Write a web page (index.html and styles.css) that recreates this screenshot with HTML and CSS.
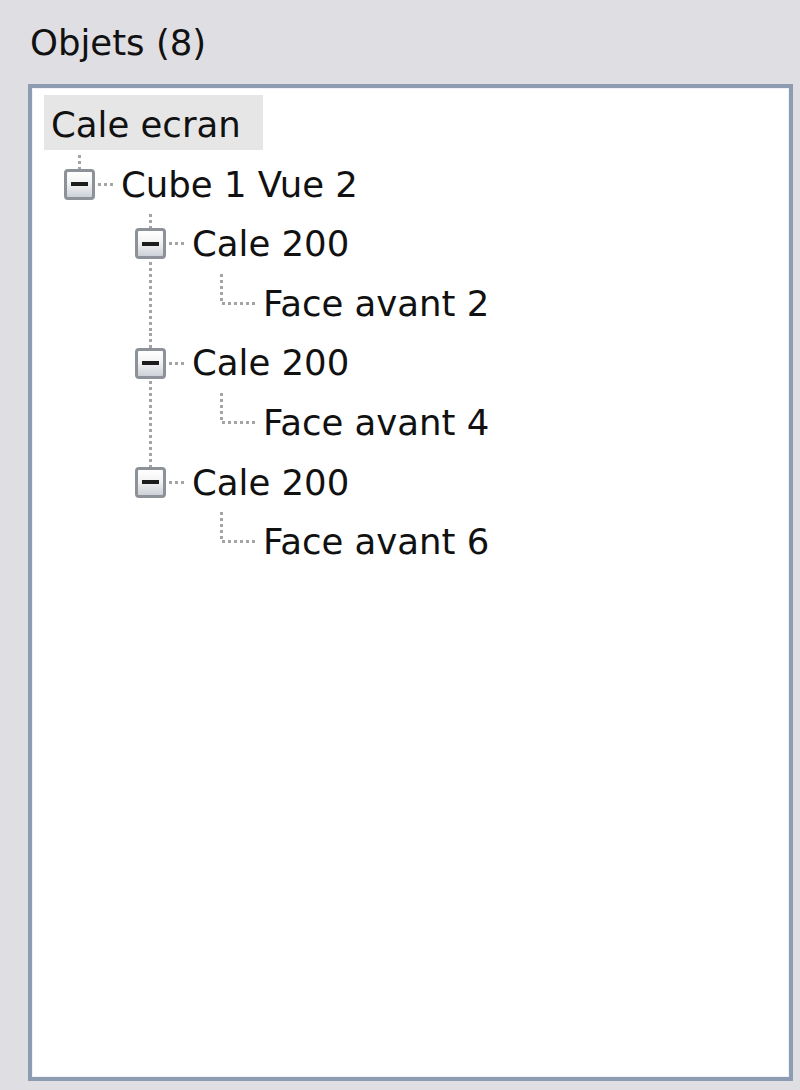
FILE: index.html
```html
<!DOCTYPE html>
<html>
<head>
    <title>Objets</title>
    <meta charset="utf-8">
    <link rel="stylesheet" href="styles.css">
</head>
<body>
    <div class="title">Objets (8)</div>
    <div class="panel">
        <div class="tree">
            <div class="row"><span class="label root">Cale ecran</span></div>
            <div class="row">
                <span class="cell exp last"><span class="box"></span></span>
                <span class="label">Cube 1 Vue 2</span>
            </div>
            <div class="row">
                <span class="cell"></span>
                <span class="cell exp"><span class="box"></span></span>
                <span class="label">Cale 200</span>
            </div>
            <div class="row">
                <span class="cell"></span>
                <span class="cell pass"></span>
                <span class="cell elbow"></span>
                <span class="label">Face avant 2</span>
            </div>
            <div class="row">
                <span class="cell"></span>
                <span class="cell exp"><span class="box"></span></span>
                <span class="label">Cale 200</span>
            </div>
            <div class="row">
                <span class="cell"></span>
                <span class="cell pass"></span>
                <span class="cell elbow"></span>
                <span class="label">Face avant 4</span>
            </div>
            <div class="row">
                <span class="cell"></span>
                <span class="cell exp last"><span class="box"></span></span>
                <span class="label">Cale 200</span>
            </div>
            <div class="row">
                <span class="cell"></span>
                <span class="cell"></span>
                <span class="cell elbow"></span>
                <span class="label">Face avant 6</span>
            </div>
        </div>
    </div>
</body>
</html>
```

FILE: styles.css
```css
body {
    margin: 0;
    background-color: #dfdee3;
    font-family: "DejaVu Sans", Verdana, sans-serif;
    font-size: 35.5px;
    color: #111;
}

.title {
    padding: 22px 0 0 30px;
    height: 42px;
    line-height: 42px;
    margin-bottom: 20px;
}

.panel {
    box-sizing: border-box;
    margin-left: 28px;
    width: 765px;
    height: 997px;
    border: 4px solid #8e9cb2;
    background-color: #fff;
    box-shadow: inset 0 0 0 1px #eef2f8;
}

.tree {
    padding: 7px 0 0 12px;
}

.row {
    display: flex;
    align-items: center;
    height: 59.6px;
}

.label {
    margin-left: 6px;
    line-height: 59.6px;
    white-space: nowrap;
}

.label.root {
    margin-left: 0;
    align-self: flex-start;
    height: 55px;
    line-height: 59px;
    padding: 0 22px 0 7px;
    background-color: #e6e6e6;
}

.cell {
    flex: none;
    width: 71px;
    height: 100%;
    display: flex;
    align-items: center;
    justify-content: center;
}

/* pointilles de l'arbre */
.pass {
    background: repeating-linear-gradient(#a4a4a4 0 3px, transparent 3px 6px) center top / 3px 100% no-repeat;
}

.elbow,
.exp.last {
    background:
        repeating-linear-gradient(#a4a4a4 0 3px, transparent 3px 6px) center top / 3px 50% no-repeat,
        repeating-linear-gradient(to right, #a4a4a4 0 3px, transparent 3px 6px) right center / 50% 3px no-repeat;
}

.exp {
    background:
        repeating-linear-gradient(#a4a4a4 0 3px, transparent 3px 6px) center top / 3px 100% no-repeat,
        repeating-linear-gradient(to right, #a4a4a4 0 3px, transparent 3px 6px) right center / 50% 3px no-repeat;
}

.box {
    box-sizing: border-box;
    width: 31px;
    height: 31px;
    border: 3px solid #8d9299;
    border-radius: 4px;
    background: linear-gradient(#ffffff 0%, #f3f3f3 45%, #cdd1d8 100%);
    display: flex;
    align-items: center;
    justify-content: center;
}

.box::after {
    content: '';
    width: 17px;
    height: 4px;
    background-color: #1c1c1c;
}
```
